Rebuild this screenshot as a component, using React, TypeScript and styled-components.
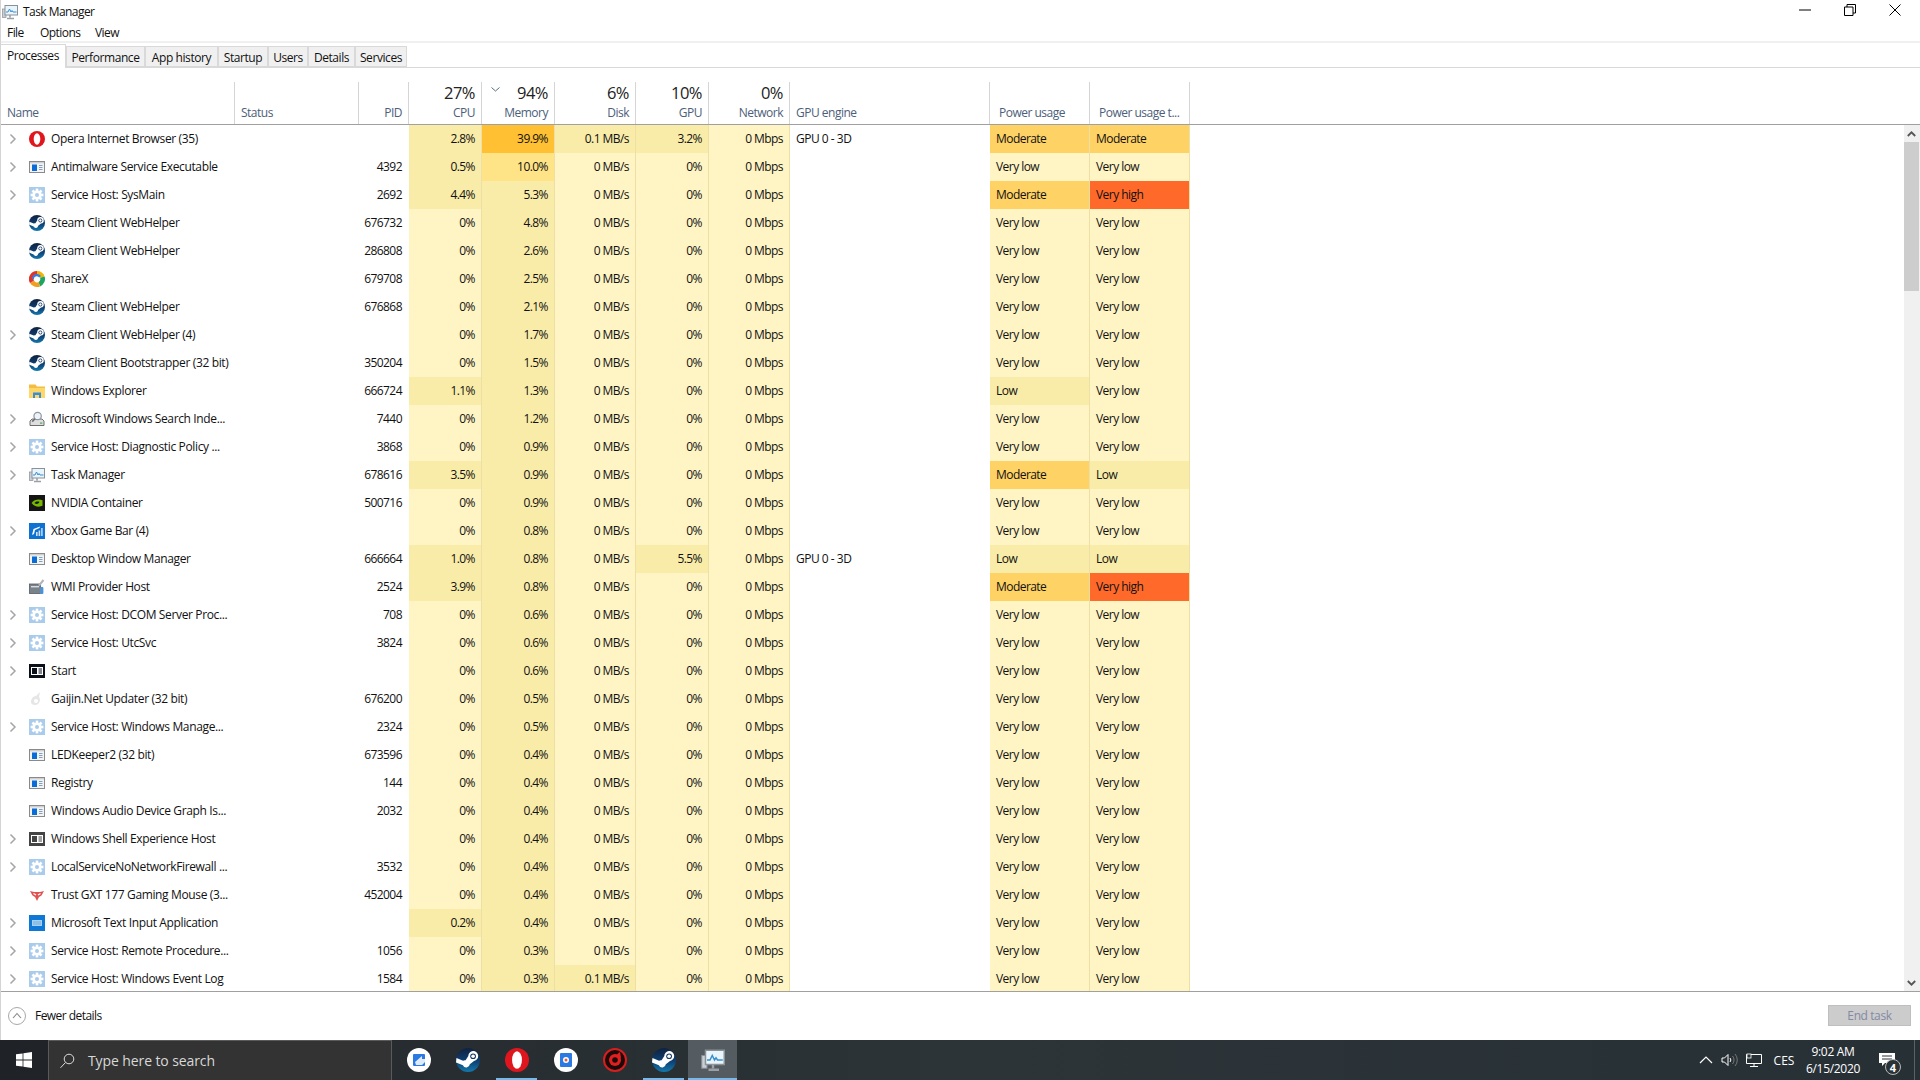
import React from 'react';
import styled, { createGlobalStyle } from 'styled-components';

const Global = createGlobalStyle`
  html, body { margin: 0; padding: 0; background: #fff; }
  body { font-family: "Open Sans", "Liberation Sans", sans-serif; font-size: 12px; color: #111; }
  #root { width: 1920px; height: 1080px; overflow: hidden; }
`;

const Screen = styled.div`
  width: 1920px; height: 1080px; display: flex; flex-direction: column; overflow: hidden; background: #fff;
`;
const Win = styled.div`
  flex: 1; min-height: 0; display: flex; flex-direction: column; border-left: 1px solid #d4d4d4;
`;
const TitleBar = styled.div`
  height: 24px; display: flex; align-items: center; padding-left: 1px; gap: 5px; flex: none; position: relative;
`;
const TitleText = styled.span`
  font-size: 12px; letter-spacing: -0.55px; color: #111; margin-bottom: 1px;
`;
const WinControls = styled.div`
  margin-left: auto; display: flex; height: 24px; align-items: flex-start; padding-right: 3px;
`;
const WinButton = styled.div`
  width: 45px; height: 20px; display: flex; align-items: center; justify-content: center; color: #000;
`;
const MenuBar = styled.div`
  height: 17px; display: flex; flex: none; align-items: center; padding-left: 6px; border-bottom: 2px solid #f0f0f0;
`;
const MenuItem = styled.span<{ $w: number }>`
  width: ${p => p.$w}px; letter-spacing: -0.55px; color: #111;
`;
const TabBar = styled.div`
  height: 25px; flex: none; display: flex; align-items: flex-end; border-bottom: 1px solid #d9d9d9; box-sizing: border-box;
`;
const Tab = styled.div<{ $w: number; $active?: boolean }>`
  width: ${p => p.$w}px; box-sizing: border-box; height: ${p => (p.$active ? 24 : 21)}px;
  margin-bottom: ${p => (p.$active ? -1 : 0)}px;
  background: ${p => (p.$active ? '#fff' : '#f0f0f0')};
  border: 1px solid #d9d9d9; border-bottom: ${p => (p.$active ? 'none' : '1px solid #d9d9d9')};
  border-left: ${p => (p.$active ? 'none' : '1px solid #d9d9d9')};
  border-right: 1px solid #d9d9d9;
  display: flex; align-items: center; justify-content: center; letter-spacing: -0.42px; color: #111;
  padding-bottom: ${p => (p.$active ? 3 : 0)}px;
  padding-top: ${p => (p.$active ? 0 : 2)}px;
  position: relative; z-index: ${p => (p.$active ? 1 : 0)};
`;
const Spacer = styled.div`height: 14px; flex: none;`;
const ListWrap = styled.div`
  flex: 1; min-height: 0; display: flex; flex-direction: column; border-bottom: 1px solid #a0a0a0;
`;
const GRID = '234px 124px 50px 73px 73px 81px 73px 81px 200px 100px 100px';
const HeaderRow = styled.div`
  display: grid; grid-template-columns: ${GRID}; flex: none; border-bottom: 1px solid #a0a0a0; height: 42px;
`;
const Head = styled.div<{ $left?: boolean; $pad?: number }>`
  border-right: 1px solid #d5d5d5; box-sizing: border-box; display: flex; flex-direction: column; justify-content: flex-end;
  align-items: ${p => (p.$left ? 'flex-start' : 'flex-end')};
  padding: 0 ${p => (p.$left ? 0 : 6)}px 3px ${p => p.$pad ?? 6}px; position: relative;
`;
const HeadPct = styled.div`
  font-size: 16.5px; line-height: 22px; color: #222; letter-spacing: -0.5px; margin-bottom: 1px;
`;
const HeadLabel = styled.div`
  font-size: 12px; line-height: 16px; color: #4c607a; letter-spacing: -0.5px; white-space: nowrap;
`;
const SortMark = styled.svg`
  position: absolute; left: 9px; top: 5px;
`;
const BodyArea = styled.div`
  flex: 1; min-height: 0; display: flex; overflow: hidden;
`;
const Rows = styled.div`
  flex: 1; min-width: 0; overflow: hidden;
`;
const Row = styled.div`
  display: grid; grid-template-columns: ${GRID}; height: 28px;
`;
const NameCell = styled.div`
  display: flex; align-items: center; min-width: 0; white-space: nowrap; color: #111; letter-spacing: -0.36px; padding-bottom: 1px;
`;
const Chevron = styled.div`
  width: 28px; flex: none; display: flex; justify-content: center; padding-right: 5px; box-sizing: border-box;
`;
const NameIcon = styled.div`
  width: 16px; height: 16px; flex: none; margin-right: 6px; display: flex;
`;
const Plain = styled.div`
  display: flex; align-items: center; justify-content: flex-end; padding: 0 7px 1px 0; letter-spacing: -0.55px; color: #111;
`;
const Heat = styled.div<{ $bg: string; $left?: boolean }>`
  background: ${p => p.$bg};
  border-right: 1px solid #eedfa4;
  box-sizing: border-box;
  display: flex; align-items: center; justify-content: ${p => (p.$left ? 'flex-start' : 'flex-end')};
  padding: ${p => (p.$left ? '0 0 1px 6px' : '0 6px 1px 0')};
  letter-spacing: -0.55px; color: #111;
`;
const Engine = styled.div`
  display: flex; align-items: center; padding: 0 0 1px 6px; letter-spacing: -0.5px; color: #111;
`;
const Scrollbar = styled.div`
  width: 16px; flex: none; background: #f0f0f0; display: flex; flex-direction: column;
`;
const ScrollArrow = styled.div`
  height: 17px; flex: none; display: flex; align-items: center; justify-content: center; padding-right: 1px;
`;
const ScrollThumb = styled.div`
  height: 149px; background: #cdcdcd; flex: none; margin-right: 1px;
`;
const ScrollGap = styled.div`flex: 1;`;
const Footer = styled.div`
  height: 47px; padding-bottom: 1px; flex: none; display: flex; align-items: center; padding-left: 7px; padding-right: 9px;
`;
const FewerBtn = styled.div`
  display: flex; align-items: center; gap: 9px; letter-spacing: -0.55px; color: #111;
`;
const EndTask = styled.div`
  margin-left: auto; width: 83px; height: 21px; box-sizing: border-box; background: #cccccc; border: 1px solid #bfbfbf;
  display: flex; align-items: center; justify-content: center; color: #838aa4; letter-spacing: -0.4px;
`;
const Taskbar = styled.div`
  height: 40px; flex: none; display: flex; align-items: stretch; color: #fff;
  background: linear-gradient(90deg, #1f2327 0%, #262c30 20%, #2c3438 50%, #273035 100%);
`;
const StartBtn = styled.div`
  width: 48px; flex: none; display: flex; align-items: center; justify-content: center;
`;
const SearchBox = styled.div`
  width: 344px; flex: none; box-sizing: border-box; background: #333; border: 1px solid #5a5a5a; border-width: 1px 1px 0 1px;
  display: flex; align-items: center; padding-left: 10px; gap: 13px; font-size: 14px; color: #d8d8d8; letter-spacing: -0.1px;
`;
const TaskApps = styled.div`
  display: flex; margin-left: 2px;
`;
const TaskApp = styled.div<{ $active?: boolean; $open?: boolean }>`
  width: 49px; display: flex; align-items: center; justify-content: center; position: relative; background: ${p => (p.$active ? '#555c61' : 'transparent')};
  &::after {
    content: ''; position: absolute; bottom: 0; height: 2px; background: #76b9ed;
    left: ${p => (p.$active ? 0 : 4)}px; right: ${p => (p.$active ? 0 : 4)}px;
    display: ${p => (p.$active || p.$open ? 'block' : 'none')};
  }
`;
const Tray = styled.div`
  margin-left: auto; display: flex; align-items: center; height: 100%;
`;
const TraySlot = styled.div<{ $w: number }>`
  width: ${p => p.$w}px; display: flex; align-items: center; justify-content: center; flex: none;
`;
const Clock = styled.div`
  width: 64px; flex: none; display: flex; flex-direction: column; align-items: center; font-size: 12px; line-height: 17px; color: #fff; letter-spacing: -0.3px;
`;
const NotifWrap = styled.div`
  position: relative; width: 44px; height: 40px; display: flex; align-items: center; justify-content: center;
`;
const Badge = styled.div`
  position: absolute; left: 20px; top: 19px; width: 16px; height: 16px; border-radius: 50%; background: #2a3236; border: 1px solid #bbb; box-sizing: border-box;
  display: flex; align-items: center; justify-content: center; font-size: 11px; font-weight: 700; color: #fff;
`;
const ShowDesktop = styled.div`
  width: 5px; margin-left: 5px; border-left: 1px solid #5a6266; flex: none; align-self: stretch;
`;

const Chev = () => (
  <svg width="8" height="12" viewBox="0 0 8 12"><path d="M1.5 1.5 6 6l-4.5 4.5" fill="none" stroke="#a6a6a6" strokeWidth="1.5" /></svg>
);

const Opera = ({ s = 16 }: { s?: number }) => (
  <svg width={s} height={s} viewBox="0 0 16 16"><ellipse cx="8" cy="8" rx="8" ry="8" fill="#e0161e" /><ellipse cx="8" cy="8" rx="3.300" ry="5.800" fill="#fff" /></svg>
);
const AppWin = ({ c = '#8a8a8a' }: { c?: string }) => (
  <svg width="16" height="16" viewBox="0 0 16 16">
    <rect x="0.5" y="2.5" width="15" height="11" fill="#f4f4f4" stroke={c} />
    <rect x="1" y="3" width="14" height="1.4" fill="#cfcfcf" />
    <rect x="3" y="5.5" width="5" height="6.5" fill="#0a6cd6" />
    <path d="M10 6.5h3.5M10 8.5h3.5M10 10.5h3.5" stroke="#7f9fc6" strokeWidth="1" />
  </svg>
);
const DarkWin = ({ c = '#0b0f1a' }: { c?: string }) => (
  <svg width="16" height="16" viewBox="0 0 16 16">
    <rect x="0" y="1" width="16" height="14" fill={c} />
    <rect x="2" y="4" width="12" height="8" fill="#fff" />
    <rect x="3" y="5" width="5" height="6" fill={c} />
    <path d="M9.5 6h3.5M9.5 8h3.5M9.5 10h3.5" stroke={c} strokeWidth="1" />
  </svg>
);
const Gear = () => (
  <svg width="16" height="16" viewBox="0 0 16 16">
    <rect width="16" height="16" fill="#a9cbec" />
    <g fill="#fff">
      <circle cx="8" cy="8" r="4.6" />
      {[0, 45, 90, 135].map(a => <rect key={a} x="6.7" y="1.6" width="2.6" height="12.8" transform={`rotate(${a} 8 8)`} />)}
    </g>
    <circle cx="8" cy="8" r="2" fill="#a9cbec" />
  </svg>
);
const Steam = ({ s = 16, id }: { s?: number; id: string }) => (
  <svg width={s} height={s} viewBox="0 0 16 16">
    <defs><linearGradient id={id} x1="0" y1="0" x2="0" y2="1"><stop offset="0" stopColor="#10223f" /><stop offset="0.55" stopColor="#0e3f72" /><stop offset="1" stopColor="#1379ad" /></linearGradient></defs>
    <circle cx="8" cy="8" r="8" fill={`url(#${id})`} />
    <path d="M0 9.6 4.6 11.5a2.4 2.4 0 0 0 4.6-.7L12 8.6A3.3 3.3 0 1 0 8.2 5.4L6.4 8.2a2.4 2.4 0 0 0-1.7.3L.3 6.700Z" fill="#fff" />
    <circle cx="11.4" cy="5.5" r="1.9" fill="#16365f" /><circle cx="11.4" cy="5.5" r="1.2" fill="#fff" />
  </svg>
);
const ShareX = () => (
  <svg width="16" height="16" viewBox="0 0 16 16">
    <path d="M8 0a8 8 0 0 1 7.6 5.5L11 6.8A3.4 3.4 0 0 0 8 4.6Z" fill="#f4b400" />
    <path d="M15.6 5.5A8 8 0 0 1 11 15.4L9.6 11A3.4 3.4 0 0 0 11 6.8Z" fill="#1ea362" />
    <path d="M11 15.4A8 8 0 0 1 1 12l4-2.4a3.4 3.4 0 0 0 4.6 1.4Z" fill="#f0a020" />
    <path d="M1 12A8 8 0 0 1 8 0v4.6A3.4 3.4 0 0 0 5 9.6Z" fill="#e0332a" />
    <path d="M3 8a5 5 0 0 1 9-3l-2.4 2A2.4 2.4 0 0 0 5 8Z" fill="#2f80ed" />
    <circle cx="8" cy="8" r="2.6" fill="#fff" />
  </svg>
);
const Folder = () => (
  <svg width="16" height="16" viewBox="0 0 16 16">
    <path d="M0 1.5h6.5L8 3.5h8V15H0Z" fill="#f3bd42" />
    <rect x="0" y="5" width="16" height="10" fill="#ffd768" />
    <rect x="4" y="9.5" width="8" height="5.5" fill="#3a8ed8" />
    <rect x="6" y="12" width="4" height="3" fill="#ffd768" />
  </svg>
);
const SearchIdx = () => (
  <svg width="16" height="16" viewBox="0 0 16 16">
    <path d="M1 10 3 8h10l2 2v4.5H1Z" fill="#dedede" stroke="#6e6e6e" />
    <rect x="11" y="11.5" width="2.4" height="1.2" fill="#4caf50" />
    <circle cx="8.6" cy="5" r="3.7" fill="#eef3f9" stroke="#8d97a3" strokeWidth="1.2" />
    <path d="M6 7.8 3.2 10.6" stroke="#6e6e6e" strokeWidth="1.6" />
  </svg>
);
const TaskMgr = ({ s = 16 }: { s?: number }) => (
  <svg width={s} height={s} viewBox="0 0 16 16">
    <rect x="0.5" y="5" width="3.5" height="8.5" fill="#c9cfd4" stroke="#8a8f94" strokeWidth="0.7" />
    <rect x="3" y="1.5" width="12.5" height="9.5" fill="#eaf4fb" stroke="#8a9299" />
    <path d="M4 8h2l1.5-3L9 8l1-1.5L11 8h3.5" fill="none" stroke="#3a8fd0" strokeWidth="1" />
    <path d="M8 11v2.5M5 14.5h7" stroke="#9aa0a5" strokeWidth="1.6" />
  </svg>
);
const Nvidia = () => (
  <svg width="16" height="16" viewBox="0 0 16 16">
    <rect width="16" height="16" fill="#151515" />
    <path d="M2.5 8C5 4.6 9.5 3.8 13.5 5.2v5.6C10 12.5 5 11.6 2.5 8Z" fill="#76b900" />
    <path d="M5.5 8C7 6.4 9 6.2 10.5 7 9.4 9 7.2 9.6 5.5 8Z" fill="#151515" />
  </svg>
);
const XboxBar = () => (
  <svg width="16" height="16" viewBox="0 0 16 16">
    <rect width="16" height="16" fill="#0f72d2" />
    <path d="M3 12 4.5 6 11 3.5 10.5 5 6 7 5 11Z" fill="#fff" />
    <path d="M7 13V9h1.6v4ZM9.6 13V7.5h1.6V13ZM12.2 13V5h1.4v8Z" fill="#cfe4f8" />
  </svg>
);
const Wmi = () => (
  <svg width="16" height="16" viewBox="0 0 16 16">
    <rect x="0.5" y="5" width="11" height="9.5" fill="#7b838a" stroke="#555b60" strokeWidth="0.8" />
    <rect x="2" y="7" width="8" height="1.4" fill="#d9dde0" />
    <rect x="11" y="8" width="3.4" height="7" rx="1" fill="#4c93d6" />
    <path d="M10 6.5 14.5 1" stroke="#b0b5b9" strokeWidth="2" />
  </svg>
);
const Gaijin = () => (
  <svg width="16" height="16" viewBox="0 0 16 16">
    <path d="M2 11c0-4 3-6 5-6l4-4-1 5c2 2 1 8-4 8-2.5 0-4-1-4-3Z" fill="#e6e6e6" />
    <circle cx="7" cy="10" r="2" fill="#fff" />
  </svg>
);
const Trust = () => (
  <svg width="16" height="16" viewBox="0 0 16 16">
    <path d="M1 4 5 5h6l4-1-2.5 4.5L10 10 8 14 6 10 3.5 8.500Z" fill="#e05252" />
    <path d="M4.500 6.500 7 8M11.500 6.500 9 8" stroke="#fff" strokeWidth="1.2" />
  </svg>
);
const TextInput = () => (
  <svg width="16" height="16" viewBox="0 0 16 16">
    <rect width="16" height="16" fill="#0f78d4" />
    <rect x="3" y="5" width="10" height="6" fill="#a9d0f2" />
    <path d="M4.500 7h7M4.500 9h7" stroke="#0f78d4" strokeWidth="0.8" strokeDasharray="1 1" />
  </svg>
);

type IconKind = 'opera' | 'app' | 'gear' | 'steam' | 'sharex' | 'folder' | 'search' | 'tm' | 'nvidia' | 'xbox' | 'wmi' | 'start' | 'gaijin' | 'shell' | 'trust' | 'text';

const renderIcon = (k: IconKind, i: number) => {
  switch (k) {
    case 'opera': return <Opera />;
    case 'app': return <AppWin />;
    case 'gear': return <Gear />;
    case 'steam': return <Steam id={`st${i}`} />;
    case 'sharex': return <ShareX />;
    case 'folder': return <Folder />;
    case 'search': return <SearchIdx />;
    case 'tm': return <TaskMgr />;
    case 'nvidia': return <Nvidia />;
    case 'xbox': return <XboxBar />;
    case 'wmi': return <Wmi />;
    case 'start': return <DarkWin />;
    case 'shell': return <DarkWin c="#444" />;
    case 'gaijin': return <Gaijin />;
    case 'trust': return <Trust />;
    case 'text': return <TextInput />;
  }
};

type R = [string, boolean, IconKind, string, number, number, string?, number?, string?, string?, string?];
const VL = 'Very low';
const data: R[] = [
  ['Opera Internet Browser (35)', true, 'opera', '', 2.8, 39.9, '0.1 MB/s', 3.2, 'GPU 0 - 3D', 'Moderate', 'Moderate'],
  ['Antimalware Service Executable', true, 'app', '4392', 0.5, 10.0],
  ['Service Host: SysMain', true, 'gear', '2692', 4.4, 5.3, undefined, undefined, undefined, 'Moderate', 'Very high'],
  ['Steam Client WebHelper', false, 'steam', '676732', 0, 4.8],
  ['Steam Client WebHelper', false, 'steam', '286808', 0, 2.6],
  ['ShareX', false, 'sharex', '679708', 0, 2.5],
  ['Steam Client WebHelper', false, 'steam', '676868', 0, 2.1],
  ['Steam Client WebHelper (4)', true, 'steam', '', 0, 1.7],
  ['Steam Client Bootstrapper (32 bit)', false, 'steam', '350204', 0, 1.5],
  ['Windows Explorer', false, 'folder', '666724', 1.1, 1.3, undefined, undefined, undefined, 'Low'],
  ['Microsoft Windows Search Inde...', true, 'search', '7440', 0, 1.2],
  ['Service Host: Diagnostic Policy ...', true, 'gear', '3868', 0, 0.9],
  ['Task Manager', true, 'tm', '678616', 3.5, 0.9, undefined, undefined, undefined, 'Moderate', 'Low'],
  ['NVIDIA Container', false, 'nvidia', '500716', 0, 0.9],
  ['Xbox Game Bar (4)', true, 'xbox', '', 0, 0.8],
  ['Desktop Window Manager', false, 'app', '666664', 1.0, 0.8, undefined, 5.5, 'GPU 0 - 3D', 'Low', 'Low'],
  ['WMI Provider Host', false, 'wmi', '2524', 3.9, 0.8, undefined, undefined, undefined, 'Moderate', 'Very high'],
  ['Service Host: DCOM Server Proc...', true, 'gear', '708', 0, 0.6],
  ['Service Host: UtcSvc', true, 'gear', '3824', 0, 0.6],
  ['Start', true, 'start', '', 0, 0.6],
  ['Gaijin.Net Updater (32 bit)', false, 'gaijin', '676200', 0, 0.5],
  ['Service Host: Windows Manage...', true, 'gear', '2324', 0, 0.5],
  ['LEDKeeper2 (32 bit)', false, 'app', '673596', 0, 0.4],
  ['Registry', false, 'app', '144', 0, 0.4],
  ['Windows Audio Device Graph Is...', false, 'app', '2032', 0, 0.4],
  ['Windows Shell Experience Host', true, 'shell', '', 0, 0.4],
  ['LocalServiceNoNetworkFirewall ...', true, 'gear', '3532', 0, 0.4],
  ['Trust GXT 177 Gaming Mouse (3...', false, 'trust', '452004', 0, 0.4],
  ['Microsoft Text Input Application', true, 'text', '', 0.2, 0.4],
  ['Service Host: Remote Procedure...', true, 'gear', '1056', 0, 0.3],
  ['Service Host: Windows Event Log', true, 'gear', '1584', 0, 0.3, '0.1 MB/s'],
];

const BASE = '#fff4c4';
const L1 = '#f9eca8';
const MID = '#ffe387';
const HOT = '#ffc133';
const pctColor = (v: number) => (v >= 30 ? HOT : v >= 8 ? MID : v > 0 ? L1 : BASE);
const powColor = (s: string) => (s === 'Moderate' ? '#ffd265' : s === 'Very high' ? '#ff6a2b' : s === 'Low' ? L1 : BASE);
const fmt = (v: number) => (v === 0 ? '0%' : `${v.toFixed(1)}%`);

const tabs: [string, number][] = [['Processes', 66], ['Performance', 79], ['App history', 73], ['Startup', 50], ['Users', 40], ['Details', 47], ['Services', 52]];

export default function App() {
  return (
    <Screen>
      <Global />
      <Win>
        <TitleBar>
          <TaskMgr />
          <TitleText>Task Manager</TitleText>
          <WinControls>
            <WinButton><svg width="12" height="12" viewBox="0 0 12 12"><path d="M0 6h12" stroke="#000" /></svg></WinButton>
            <WinButton><svg width="12" height="12" viewBox="0 0 12 12"><path d="M.5 3h8.500v8.500H.5ZM3 3V.500h8.500V9H9" fill="none" stroke="#000" /></svg></WinButton>
            <WinButton><svg width="12" height="12" viewBox="0 0 12 12"><path d="M.5.500l11 11M11.500.500l-11 11" stroke="#000" /></svg></WinButton>
          </WinControls>
        </TitleBar>
        <MenuBar>
          <MenuItem $w={33}>File</MenuItem>
          <MenuItem $w={55}>Options</MenuItem>
          <MenuItem $w={40}>View</MenuItem>
        </MenuBar>
        <TabBar>
          {tabs.map(([t, w], i) => <Tab key={t} $w={i === 0 ? w - 1 : w} $active={i === 0}>{t}</Tab>)}
        </TabBar>
        <Spacer />
        <ListWrap>
          <HeaderRow>
            <Head $left><HeadLabel>Name</HeadLabel></Head>
            <Head $left><HeadLabel>Status</HeadLabel></Head>
            <Head><HeadLabel>PID</HeadLabel></Head>
            <Head><HeadPct>27%</HeadPct><HeadLabel>CPU</HeadLabel></Head>
            <Head>
              <SortMark width="9" height="5" viewBox="0 0 9 5"><path d="M.5.500 4.500 4l4-3.500" fill="none" stroke="#5a6b80" /></SortMark>
              <HeadPct>94%</HeadPct><HeadLabel>Memory</HeadLabel>
            </Head>
            <Head><HeadPct>6%</HeadPct><HeadLabel>Disk</HeadLabel></Head>
            <Head><HeadPct>10%</HeadPct><HeadLabel>GPU</HeadLabel></Head>
            <Head><HeadPct>0%</HeadPct><HeadLabel>Network</HeadLabel></Head>
            <Head $left $pad={6}><HeadLabel>GPU engine</HeadLabel></Head>
            <Head $left $pad={9}><HeadLabel>Power usage</HeadLabel></Head>
            <Head $left $pad={9}><HeadLabel>Power usage t...</HeadLabel></Head>
          </HeaderRow>
          <BodyArea>
            <Rows>
              {data.map((r, i) => {
                const [name, exp, icon, pid, cpu, mem, disk, gpu, eng, p1, p2] = r;
                const pw1 = p1 ?? VL;
                const pw2 = p2 ?? VL;
                return (
                  <Row key={i}>
                    <NameCell>
                      <Chevron>{exp && <Chev />}</Chevron>
                      <NameIcon>{renderIcon(icon, i)}</NameIcon>
                      {name}
                    </NameCell>
                    <div />
                    <Plain>{pid}</Plain>
                    <Heat $bg={pctColor(cpu)}>{fmt(cpu)}</Heat>
                    <Heat $bg={pctColor(mem)}>{fmt(mem)}</Heat>
                    <Heat $bg={disk ? L1 : BASE}>{disk ?? '0 MB/s'}</Heat>
                    <Heat $bg={gpu ? L1 : BASE}>{gpu ? fmt(gpu) : '0%'}</Heat>
                    <Heat $bg={BASE}>0 Mbps</Heat>
                    <Engine>{eng}</Engine>
                    <Heat $bg={powColor(pw1)} $left>{pw1}</Heat>
                    <Heat $bg={powColor(pw2)} $left>{pw2}</Heat>
                  </Row>
                );
              })}
            </Rows>
            <Scrollbar>
              <ScrollArrow><svg width="9" height="6" viewBox="0 0 9 6"><path d="M.8 5 4.500 1.300 8.200 5" fill="none" stroke="#555" strokeWidth="1.800" /></svg></ScrollArrow>
              <ScrollThumb />
              <ScrollGap />
              <ScrollArrow><svg width="9" height="6" viewBox="0 0 9 6"><path d="M.8 1 4.500 4.700 8.200 1" fill="none" stroke="#555" strokeWidth="1.800" /></svg></ScrollArrow>
            </Scrollbar>
          </BodyArea>
        </ListWrap>
        <Footer>
          <FewerBtn>
            <svg width="18" height="18" viewBox="0 0 18 18"><circle cx="9" cy="9" r="8.500" fill="none" stroke="#a8a8a8" /><path d="M5 11 9 6.500l4 4.500" fill="none" stroke="#888" strokeWidth="1.100" /></svg>
            Fewer details
          </FewerBtn>
          <EndTask>End task</EndTask>
        </Footer>
      </Win>
      <Taskbar>
        <StartBtn>
          <svg width="16" height="16" viewBox="0 0 16 16"><path d="M0 2.300 6.600 1.400v6.200H0ZM7.400 1.300 16 0v7.600H7.400ZM0 8.400h6.600v6.200L0 13.700ZM7.400 8.400H16V16l-8.600-1.300Z" fill="#fff" /></svg>
        </StartBtn>
        <SearchBox>
          <svg width="16" height="16" viewBox="0 0 16 16"><circle cx="10" cy="6" r="4.800" fill="none" stroke="#ddd" /><path d="M6.500 9.500 1.500 14.800" stroke="#ddd" /></svg>
          Type here to search
        </SearchBox>
        <TaskApps>
          <TaskApp>
            <svg width="24" height="24" viewBox="0 0 24 24"><circle cx="12" cy="12" r="12" fill="#fff" /><rect x="6" y="6" width="12" height="12" rx="1" fill="#2a7ae2" /><path d="M8 14l7-6v3h3v3l-3 3H9Z" fill="#fff" opacity=".85" /></svg>
          </TaskApp>
          <TaskApp><Steam s={24} id="tb1" /></TaskApp>
          <TaskApp $open><Opera s={24} /></TaskApp>
          <TaskApp>
            <svg width="24" height="24" viewBox="0 0 24 24"><circle cx="12" cy="12" r="12" fill="#fff" /><rect x="6" y="5" width="12" height="14" rx="1" fill="#2a7ae2" /><circle cx="12" cy="12" r="3" fill="#fff" /><circle cx="12" cy="12" r="1.500" fill="#e85b3a" /></svg>
          </TaskApp>
          <TaskApp>
            <svg width="24" height="24" viewBox="0 0 24 24"><circle cx="12" cy="12" r="11" fill="#1c0a0a" stroke="#d81e1e" strokeWidth="2" /><g fill="#e02020"><circle cx="12" cy="12" r="6" /><path d="M17 4l1 6-6-2Z" /></g><circle cx="12" cy="12" r="2.800" fill="#1c0a0a" /></svg>
          </TaskApp>
          <TaskApp $open><Steam s={24} id="tb2" /></TaskApp>
          <TaskApp $active><TaskMgr s={24} /></TaskApp>
        </TaskApps>
        <Tray>
          <TraySlot $w={26}><svg width="14" height="8" viewBox="0 0 14 8"><path d="M1 7l6-6 6 6" fill="none" stroke="#fff" strokeWidth="1.200" /></svg></TraySlot>
          <TraySlot $w={22}><svg width="18" height="14" viewBox="0 0 18 14"><path d="M1 5h2.500L7 1.500v11L3.500 9H1Z" fill="none" stroke="#fff" /><path d="M9 5a3 3 0 0 1 0 4" fill="none" stroke="#fff" /><path d="M11.500 3a6 6 0 0 1 0 8M14 1a9 9 0 0 1 0 12" fill="none" stroke="#777" /></svg></TraySlot>
          <TraySlot $w={26}><svg width="16" height="14" viewBox="0 0 16 14"><path d="M.5 1.500h15v9H.5ZM8 10.500v3M4 13.500h8" fill="none" stroke="#fff" /><rect x="1" y="1" width="4" height="4" fill="#2a3236" stroke="#fff" strokeWidth=".8" /></svg></TraySlot>
          <TraySlot $w={34}>CES</TraySlot>
          <Clock><span>9:02 AM</span><span>6/15/2020</span></Clock>
          <NotifWrap>
            <svg width="16" height="16" viewBox="0 0 16 16"><path d="M0 1h16v10H6l-3 3v-3H0Z" fill="#fff" /><path d="M3 4h10M3 7h10" stroke="#2a3236" /></svg>
            <Badge>4</Badge>
          </NotifWrap>
          <ShowDesktop />
        </Tray>
      </Taskbar>
    </Screen>
  );
}
